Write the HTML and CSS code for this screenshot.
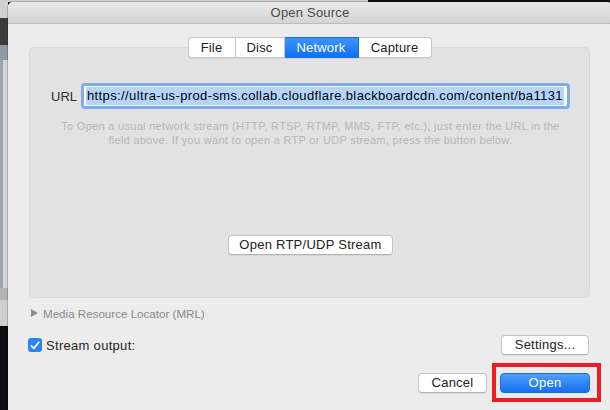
FILE: index.html
```html
<!DOCTYPE html>
<html>
<head>
<meta charset="utf-8">
<title>Open Source</title>
<link rel="stylesheet" href="styles.css">
</head>
<body>
<div class="window">
  <div class="titlebar">Open Source</div>
  <div class="content">
    <div class="tabs">
      <span class="tab">File</span>
      <span class="tab">Disc</span>
      <span class="tab tab-active">Network</span>
      <span class="tab">Capture</span>
    </div>
    <div class="panel">
      <div class="url-row">
        <span class="url-label">URL</span>
        <div class="url-field"><span class="url-text">https://ultra-us-prod-sms.collab.cloudflare.blackboardcdn.com/content/ba1131</span></div>
      </div>
      <p class="help">To Open a usual network stream (HTTP, RTSP, RTMP, MMS, FTP, etc.), just enter the URL in the field above. If you want to open a RTP or UDP stream, press the button below.</p>
      <div class="rtp-row"><button class="btn btn-rtp">Open RTP/UDP Stream</button></div>
    </div>
    <div class="mrl"><span class="disclosure"></span><span>Media Resource Locator (MRL)</span></div>
    <div class="stream-row">
      <label class="check-label"><span class="checkbox"><svg width="10" height="9" viewBox="0 0 10 9"><path d="M1.3 4.8 L3.9 7.4 L8.8 1.2" fill="none" stroke="#fff" stroke-width="1.7" stroke-linecap="round" stroke-linejoin="round"/></svg></span>Stream output:</label>
      <button class="btn btn-settings">Settings...</button>
    </div>
    <div class="actions">
      <button class="btn btn-cancel">Cancel</button>
      <span class="highlight"><button class="btn btn-primary">Open</button></span>
    </div>
  </div>
</div>
</body>
</html>
```

FILE: styles.css
```css
html, body {
  margin: 0;
  padding: 0;
}
body {
  width: 610px;
  height: 410px;
  overflow: hidden;
  font-family: "Liberation Sans", Arial, sans-serif;
  background-color: #0c0e12;
  background-image:
    linear-gradient(to right, #cfcfcf 0, #cfcfcf 368px, #0d0d0f 368px),
    linear-gradient(#9ea3aa, #9ea3aa),
    linear-gradient(to bottom, #d2d2d2 0, #d2d2d2 18px, #3b3b3b 18px, #3b3b3b 45px, #8f99a6 45px, #8f99a6 60px, #d3d4d6 60px, #d3d4d6 288px, #b4b4b4 288px, #b4b4b4 300px, #cfcfcf 300px, #cfcfcf 326px, #0c0e12 326px);
  background-size: 100% 2px, 3px 228px, 8px 100%;
  background-position: 0 0, 0 60px, 0 0;
  background-repeat: no-repeat;
}

.window {
  margin: 2px 0 0 8px;
  width: 604px;
  height: 420px;
  background: #ececec;
  border-radius: 5px 5px 0 0;
  box-shadow: 0 0 0 1px rgba(0, 0, 0, 0.18);
  overflow: hidden;
}

.titlebar {
  height: 21px;
  line-height: 21px;
  text-align: center;
  font-size: 13px;
  letter-spacing: 0.2px;
  color: #4b4b4b;
  background: linear-gradient(to bottom, #e9e9e9, #d4d4d4);
  border-bottom: 1px solid #bdbdbd;
}

.content {
  padding: 13px 22px 0 21px;
}

.tabs {
  display: flex;
  justify-content: center;
  margin-bottom: -11px;
  position: relative;
  z-index: 1;
}
.tab {
  height: 19px;
  line-height: 19px;
  font-size: 13px;
  letter-spacing: 0.2px;
  color: #222;
  background: #fff;
  border: 1px solid #c6c6c6;
  border-left-width: 0;
  text-align: center;
  box-shadow: 0 1px 0 rgba(0, 0, 0, 0.06);
}
.tab:nth-child(1) { width: 46px; border-left-width: 1px; border-radius: 4px 0 0 4px; }
.tab:nth-child(2) { width: 48px; }
.tab:nth-child(3) { width: 73px; }
.tab:nth-child(4) { width: 72px; border-radius: 0 4px 4px 0; }
.tab-active {
  color: #fff;
  background: linear-gradient(to bottom, #3f93f9, #1071f2);
  border-color: #1a6fe6;
}

.panel {
  box-sizing: border-box;
  height: 251px;
  background: #e2e2e2;
  border: 1px solid #d9d9d9;
  border-radius: 5px;
  padding: 35px 19px 0 21px;
  display: flex;
  flex-direction: column;
}

.url-row {
  display: flex;
  align-items: center;
}
.url-label {
  width: 30px;
  font-size: 13px;
  color: #2e2e2e;
}
.url-field {
  flex: 1;
  min-width: 0;
  height: 20px;
  padding: 0 3px 0 2px;
  background: #fff;
  border: 3px solid #7faaec;
  border-radius: 4px;
  overflow: hidden;
  white-space: nowrap;
  display: flex;
  align-items: center;
}
.url-text {
  display: block;
  flex: 1;
  font-size: 13px;
  letter-spacing: 0.38px;
  line-height: 18px;
  color: #000;
  background: #b3d5fd;
  padding-left: 1px;
}

.help {
  margin: 10px 0 0;
  font-size: 11px;
  letter-spacing: 0.3px;
  line-height: 14px;
  color: #b7b7b7;
  text-align: center;
  padding: 0;
}

.rtp-row {
  display: flex;
  justify-content: center;
  margin-top: auto;
  margin-bottom: 42px;
}

.btn {
  box-sizing: border-box;
  height: 20px;
  padding: 0 8px;
  font-family: "Liberation Sans", Arial, sans-serif;
  font-size: 13px;
  letter-spacing: 0.25px;
  color: #222;
  background: #fff;
  border: 1px solid #c4c4c4;
  border-bottom-color: #b2b2b2;
  border-radius: 4px;
  box-shadow: 0 1px 0 rgba(0, 0, 0, 0.05);
  line-height: 18px;
}
.btn-rtp { width: 165px; }
.btn-settings { width: 88px; margin-right: 1px; }
.btn-cancel { width: 69px; }
.btn-primary {
  width: 90px;
  color: #fff;
  background: linear-gradient(to bottom, #4f9ffb, #1570f1);
  border-color: #1c6de0;
  display: block;
}

.mrl {
  display: flex;
  align-items: center;
  height: 14px;
  margin-top: 8px;
  font-size: 11.6px;
  color: #8a8a8a;
}
.disclosure {
  width: 0;
  height: 0;
  margin: 0 5px 0 2px;
  border-left: 7px solid #8e8e8e;
  border-top: 4px solid transparent;
  border-bottom: 4px solid transparent;
}

.stream-row {
  display: flex;
  align-items: center;
  justify-content: space-between;
  margin-top: 15px;
}
.check-label {
  display: flex;
  align-items: center;
  font-size: 13px;
  letter-spacing: 0.3px;
  color: #262626;
  margin-left: -1px;
}
.checkbox {
  box-sizing: border-box;
  width: 14px;
  height: 14px;
  margin-right: 4px;
  background: #2b84f6;
  border-radius: 3px;
  display: flex;
  align-items: center;
  justify-content: center;
}

.actions {
  display: flex;
  justify-content: flex-end;
  align-items: center;
  gap: 13px;
  margin-top: 18px;
}
.highlight {
  position: relative;
  display: block;
}
.highlight::after {
  content: "";
  position: absolute;
  top: -10px;
  left: -8px;
  right: -11px;
  bottom: -9px;
  border: 4px solid #ee1c24;
  pointer-events: none;
}
```
